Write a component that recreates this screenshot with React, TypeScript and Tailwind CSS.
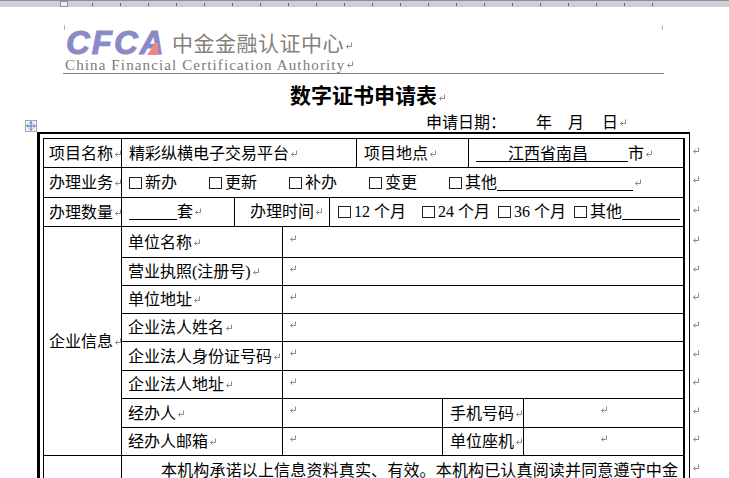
import { Move } from "lucide-react";
import type { ReactNode } from "react";

const rowHeights = [29, 30, 29, 31, 28, 28, 28, 29, 28, 29, 28, 30];

const Mark = ({ className = "" }: { className?: string }) => (
  <svg width="8" height="8" viewBox="0 0 8 8" fill="none" stroke="#8a8a8a" strokeWidth="1" className={`inline-block shrink-0 ${className}`}>
    <path d="M6.5 0.5V4.5H1.5M3.5 2.5L1.5 4.5L3.5 6.5" />
  </svg>
);

const Fill = ({ className }: { className: string }) => (
  <span className={`inline-block h-[16px] border-b border-black ${className}`} />
);

const Cell = ({ className = "", children }: { className?: string; children?: ReactNode }) => (
  <div className={`flex shrink-0 items-center whitespace-pre border-r border-black ${className}`}>{children}</div>
);

const Row = ({ h, children }: { h: number; children: ReactNode }) => (
  <div style={{ height: h }} className="flex border-b border-black">
    {children}
  </div>
);

const Label = ({ children }: { children: ReactNode }) => (
  <Cell className="w-[78px] pl-[5px] pt-[1px]">
    {children}
    <Mark className="ml-[1px]" />
  </Cell>
);

const InfoRow = ({ h, label }: { h: number; label: string }) => (
  <Row h={h}>
    <Cell className="w-[161px] pl-[6px] pt-[1px]">
      {label}
      <Mark className="ml-[1px]" />
    </Cell>
    <div className="flex items-center pb-[6px] pl-[6px]">
      <Mark />
    </div>
  </Row>
);

const ContactRow = ({ h, label, other }: { h: number; label: string; other: string }) => (
  <Row h={h}>
    <Cell className="w-[161px] pl-[6px] pt-[1px]">
      {label}
      <Mark className="ml-[1px]" />
    </Cell>
    <Cell className="w-[160px] pb-[6px] pl-[6px]">
      <Mark />
    </Cell>
    <Cell className="w-[81px] pl-[7px] pt-[1px]">
      {other}
      <Mark className="ml-[1px]" />
    </Cell>
    <div className="flex flex-1 items-center justify-center pb-[6px]">
      <Mark />
    </div>
  </Row>
);

const Box = ({ className, children }: { className: string; children: ReactNode }) => (
  <span className={`flex shrink-0 items-center whitespace-pre ${className}`}>
    <span className="mr-[3px] inline-block h-[12px] w-[13px] border border-[#222]" />
    <span>{children}</span>
  </span>
);

export default function App() {
  return (
    <div className="relative h-[478px] w-[729px] overflow-hidden bg-white font-['Liberation_Serif','Noto_Sans_CJK_SC',serif] text-[16px] leading-[16px] text-black">
      <div className="relative flex h-[7px] items-center border-t border-[#8d9299] bg-[#ccd0d6] pl-[92px]">
        <span className="absolute left-[60px] top-0 h-[6px] w-[8px] border border-[#8d9299] bg-[#eceef0]" />
        {Array.from({ length: 21 }).map((_, i) => (
          <span key={i} className="mr-[27px] h-[3px] w-px bg-[#5f646b]" />
        ))}
      </div>

      <div className="relative ml-[63px] h-[67px] w-[601px] border-b border-[#808080]">
        <span className="absolute left-[1px] top-[18px] h-[5px] w-px bg-[#b5b5b5]" />
        <span className="absolute right-[1px] top-[18px] h-[5px] w-px bg-[#b5b5b5]" />
        <div className="flex h-[50px] items-end pb-[2px] pl-[3px]">
          <div className="relative h-[24px] w-[106px]">
            <span className="block font-['Liberation_Sans'] text-[33px] font-bold italic leading-[24px] tracking-[2px] text-[#8a8ac6] [-webkit-text-stroke:1px_#8a8ac6]">
              CFCA
            </span>
            <svg width="12" height="12" viewBox="0 0 12 12" className="absolute left-[81px] top-[12px]">
              <polygon points="8,0 11,0 11,12 0,12" fill="#f28585" />
            </svg>
          </div>
          <span className="mb-[-1px] flex items-center text-[21px] leading-[24px] tracking-[0.5px] text-[#85807a]">
            中金金融认证中心
            <Mark className="ml-[1px] mt-[3px]" />
          </span>
        </div>
        <div className="flex items-center pl-[2px] text-[15px] leading-[16px] tracking-[1.13px] text-[#7c7a76]">
          China Financial Certification Authority
          <Mark className="ml-[1px]" />
        </div>
      </div>

      <div className="flex h-[45px] items-center justify-center pb-[2px] pl-[7px] text-[21px] font-bold">
        数字证书申请表
        <Mark className="ml-[1px] mt-[5px]" />
      </div>

      <div className="flex h-[6px] items-center pl-[426px] pt-[2px]">
        <span>申请日期：</span>
        <span className="ml-[30px]">年</span>
        <span className="ml-[16px]">月</span>
        <span className="ml-[18px]">日</span>
        <Mark className="ml-[1px]" />
      </div>

      <div className="absolute left-[25px] top-[120px] flex h-[12px] w-[12px] items-center justify-center border border-[#a8a8a8] bg-[#eef1f6]">
        <Move size={10} strokeWidth={2} className="text-[#2f66c8]" />
      </div>

      <div className="mt-[7px] flex pl-[37px]">
        <div className="w-[653px] border-l-[3px] border-r border-t-[2px] border-black pl-[3px] pr-[4px] pt-[4px]">
          <div className="w-[642px] border-l border-r-2 border-t border-black">
            <Row h={rowHeights[0]}>
              <Label>项目名称</Label>
              <Cell className="w-[235px] pl-[7px] pt-[1px]">
                精彩纵横电子交易平台
                <Mark className="ml-[1px]" />
              </Cell>
              <Cell className="w-[112px] pl-[7px] pt-[1px]">
                项目地点
                <Mark className="ml-[1px]" />
              </Cell>
              <div className="flex items-center pl-[7px] pt-[1px]">
                <span className="h-[16px] w-[152px] border-b border-black pl-[32px] leading-[15px]">江西省南昌</span>
                市
                <Mark className="ml-[1px]" />
              </div>
            </Row>
            <Row h={rowHeights[1]}>
              <Label>办理业务</Label>
              <div className="flex items-center pl-[7px]">
                <Box className="w-[80px]">新办</Box>
                <Box className="w-[80px]">更新</Box>
                <Box className="w-[80px]">补办</Box>
                <Box className="w-[80px]">变更</Box>
                <Box className="">其他</Box>
                <Fill className="w-[136px]" />
                <Mark className="ml-[1px]" />
              </div>
            </Row>
            <Row h={rowHeights[2]}>
              <Label>办理数量</Label>
              <Cell className="w-[113px] pl-[7px]">
                <Fill className="w-[48px]" />套
                <Mark className="ml-[1px]" />
              </Cell>
              <Cell className="w-[95px] pl-[15px]">
                办理时间
                <Mark className="ml-[1px]" />
              </Cell>
              <div className="flex items-center pl-[8px]">
                <Box className="w-[84px]">12 个月</Box>
                <Box className="w-[76px]">24 个月</Box>
                <Box className="w-[76px]">36 个月</Box>
                <Box className="">其他</Box>
                <Fill className="w-[58px]" />
              </div>
            </Row>
            <div className="flex">
              <div className="flex shrink-0 border-b border-black">
                <Label>企业信息</Label>
              </div>
              <div className="flex-1">
                <InfoRow h={rowHeights[3]} label="单位名称" />
                <InfoRow h={rowHeights[4]} label="营业执照(注册号)" />
                <InfoRow h={rowHeights[5]} label="单位地址" />
                <InfoRow h={rowHeights[6]} label="企业法人姓名" />
                <InfoRow h={rowHeights[7]} label="企业法人身份证号码" />
                <InfoRow h={rowHeights[8]} label="企业法人地址" />
                <ContactRow h={rowHeights[9]} label="经办人" other="手机号码" />
                <ContactRow h={rowHeights[10]} label="经办人邮箱" other="单位座机" />
              </div>
            </div>
            <div className="flex h-[40px]">
              <Cell className="w-[78px]" />
              <div className="pl-[39px] pt-[7px] tracking-[0.16px]">本机构承诺以上信息资料真实、有效。本机构已认真阅读并同意遵守中金</div>
            </div>
          </div>
        </div>
        <div className="w-[12px] pl-[2px] pt-[7px]">
          {rowHeights.map((h, i) => (
            <div key={i} style={{ height: h }} className="flex items-center pb-[6px]">
              <Mark />
            </div>
          ))}
        </div>
      </div>
    </div>
  );
}
